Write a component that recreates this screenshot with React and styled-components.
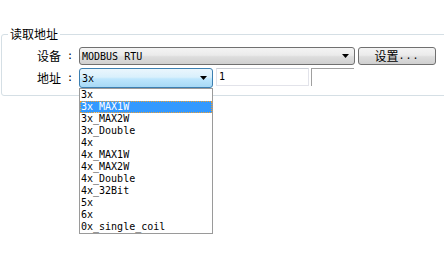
import React from "react";
import styled, { createGlobalStyle } from "styled-components";

const Global = createGlobalStyle`
  * { box-sizing: border-box; }
  html, body { margin: 0; padding: 0; background: #fff; height: 100%; }
  #root { min-height: 100%; }
  body {
    font-family: "Noto Sans CJK SC", "DejaVu Sans", sans-serif;
    font-size: 12px;
    color: #000;
  }
`;

const mono = `"DejaVu Sans Mono", "Liberation Mono", "Noto Sans CJK SC", monospace`;

const Page = styled.main`
  min-height: 265px;
  overflow: hidden;
`;

const GroupBox = styled.section`
  margin: 34px -20px 0 1px;
  padding: 0 5px 7px 5px;
  border: 1px solid #d5dfe5;
  border-radius: 3px;
  display: flex;
  flex-direction: column;
  gap: 3px;
`;

const Title = styled.h2`
  align-self: flex-start;
  margin: -8px 0 3px 1px;
  padding: 0 2px;
  background: #fff;
  font-size: 12px;
  font-weight: normal;
  line-height: 14px;
  height: 14px;
`;

const Row = styled.div`
  display: flex;
  align-items: flex-start;
  height: ${(p) => p.$h}px;
`;

const Label = styled.span`
  width: 54px;
  text-align: right;
  font-size: 12px;
  line-height: ${(p) => p.$h}px;
  white-space: nowrap;
`;

const Colon = styled.span`
  width: 18px;
  text-align: center;
  font-family: ${mono};
  font-size: 10px;
  line-height: ${(p) => p.$h}px;
`;

const ComboWrap = styled.div`
  position: relative;
  width: ${(p) => p.$w}px;
  height: ${(p) => p.$h}px;
`;

const Combo = styled.div`
  width: 100%;
  height: 100%;
  display: flex;
  align-items: center;
  justify-content: space-between;
  padding: 0 5px 0 2px;
  border: 1px solid ${(p) => (p.$active ? "#3c7fb1" : "#707070")};
  border-radius: 3px;
  background: ${(p) =>
    p.$active
      ? "linear-gradient(#eaf6fd 0%, #d9f0fc 45%, #bee6fd 55%, #a7d9f5 100%)"
      : "linear-gradient(#f4f4f4 0%, #ebebeb 45%, #dddddd 55%, #d0d0d0 100%)"};
  font-family: ${mono};
  font-size: 10px;
  white-space: pre;
`;

const Arrow = () => (
  <svg width="7" height="4" viewBox="0 0 7 4">
    <polygon points="0,0 7,0 3.5,4" fill="#000" />
  </svg>
);

const Button = styled.button`
  margin-left: 3px;
  width: 78px;
  height: 18px;
  padding: 0;
  border: 1px solid #707070;
  border-radius: 3px;
  background: linear-gradient(#f4f4f4 0%, #ebebeb 45%, #dddddd 55%, #d0d0d0 100%);
  font-family: "Noto Sans CJK SC", sans-serif;
  font-size: 12px;
  line-height: 16px;
  color: #000;
  display: flex;
  align-items: center;
  justify-content: center;
`;

const Dots = styled.span`
  font-family: ${mono};
  font-size: 10px;
  letter-spacing: 1px;
`;

const Input = styled.div`
  margin-left: 3px;
  width: 93px;
  height: 18px;
  border: 1px solid #e2e3ea;
  border-top-color: #c9cdd4;
  padding-left: 2px;
  font-family: ${mono};
  font-size: 10px;
  line-height: 16px;
  background: #fff;
`;

const Stub = styled.div`
  margin-left: 2px;
  width: 43px;
  height: 18px;
  border-left: 1px solid #a0a0a0;
  border-top: 1px solid #a0a0a0;
`;

const List = styled.ul`
  position: absolute;
  top: 100%;
  left: 0;
  width: 134px;
  margin: 0;
  padding: 0;
  list-style: none;
  background: #fff;
  border: 1px solid #9a9a9a;
  z-index: 5;
`;

const Item = styled.li`
  height: 12px;
  line-height: 12px;
  padding-left: 1px;
  font-family: ${mono};
  font-size: 10px;
  white-space: pre;
  color: ${(p) => (p.$sel ? "#fff" : "#000")};
  background: ${(p) => (p.$sel ? "#3399ff" : "transparent")};
  outline: ${(p) => (p.$sel ? "1px dotted #f0a030" : "none")};
  outline-offset: -1px;
`;

const items = [
  "3x",
  "3x_MAX1W",
  "3x_MAX2W",
  "3x_Double",
  "4x",
  "4x_MAX1W",
  "4x_MAX2W",
  "4x_Double",
  "4x_32Bit",
  "5x",
  "6x",
  "0x_single_coil",
];

export default function App() {
  return (
    <Page>
      <Global />
      <GroupBox>
        <Title>读取地址</Title>
        <Row $h={18}>
          <Label $h={18}>设备</Label>
          <Colon $h={18}>:</Colon>
          <ComboWrap $w={276} $h={18}>
            <Combo>
              <span>MODBUS RTU</span>
              <Arrow />
            </Combo>
          </ComboWrap>
          <Button>
            设置<Dots>...</Dots>
          </Button>
        </Row>
        <Row $h={20}>
          <Label $h={20}>地址</Label>
          <Colon $h={20}>:</Colon>
          <ComboWrap $w={134} $h={20}>
            <Combo $active>
              <span>3x</span>
              <Arrow />
            </Combo>
            <List>
              {items.map((it, i) => (
                <Item key={it} $sel={i === 1}>
                  {it}
                </Item>
              ))}
            </List>
          </ComboWrap>
          <Input>1</Input>
          <Stub />
        </Row>
      </GroupBox>
    </Page>
  );
}
